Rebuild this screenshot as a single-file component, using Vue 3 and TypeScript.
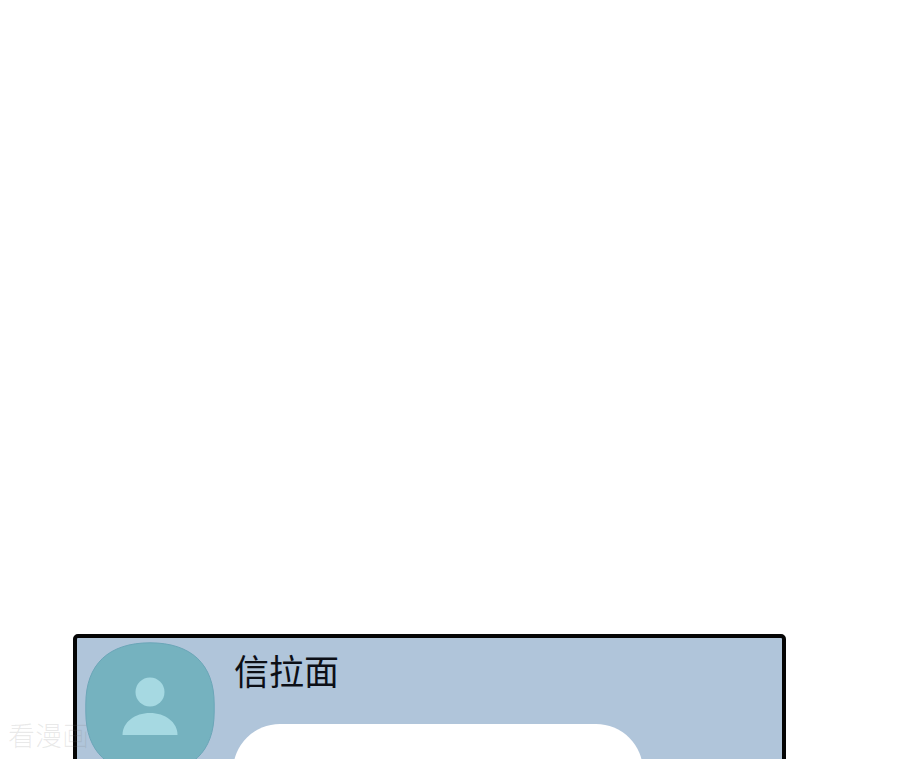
<script setup lang="ts">
const contactName = '信拉面'
const watermark = '看漫画'
</script>

<template>
  <div class="page">
    <div class="card">
      <svg class="avatar" width="130" height="132" viewBox="0 0 130 132">
        <path
          class="avatar-bg"
          d="M65 .8C24 .8 .8 22 .8 62v8c0 40 23 61.200 64.200 61.200s64.200-21.200 64.200-61.200v-8C129.200 22 106 .8 65 .8Z"
        />
        <circle class="avatar-fg" cx="65" cy="50" r="14.500" />
        <path class="avatar-fg" d="M37.500 93C37.500 80 50 71 65 71s27.500 9 27.500 22Z" />
      </svg>
      <div class="body">
        <div class="name">{{ contactName }}</div>
        <div class="bubble"></div>
      </div>
    </div>
    <div class="watermark">{{ watermark }}</div>
  </div>
</template>

<style>
html,
body {
  margin: 0;
  background: #fff;
  overflow: hidden;
}
</style>

<style scoped>
.page {
  position: relative;
  height: 759px;
  overflow: hidden;
  background: #fff;
  padding: 634px 0 0 73px;
  box-sizing: border-box;
}
.card {
  width: 713px;
  height: 300px;
  box-sizing: border-box;
  border: 4px solid #050505;
  border-radius: 5px;
  background: #b0c5da;
  padding: 4px 0 0 8px;
  display: flex;
  gap: 18px;
}
.avatar {
  flex: none;
}
.avatar-bg {
  fill: #75b2bf;
  stroke: #6ba6b8;
  stroke-width: 1;
}
.avatar-fg {
  fill: #a6d9e2;
}
.body {
  display: flex;
  flex-direction: column;
}
.name {
  font-family: "Noto Sans CJK SC", sans-serif;
  font-size: 35px;
  line-height: 50px;
  margin: 3px 0 0 1px;
  color: #0c0f16;
}
.bubble {
  width: 410px;
  height: 120px;
  margin-top: 29px;
  background: #fff;
  border-radius: 47px;
}
.watermark {
  position: absolute;
  left: 8px;
  top: 718px;
  font-family: "Noto Sans CJK SC", sans-serif;
  font-size: 27px;
  line-height: 34px;
  color: rgba(120, 120, 120, 0.16);
  font-weight: 300;
}
</style>
